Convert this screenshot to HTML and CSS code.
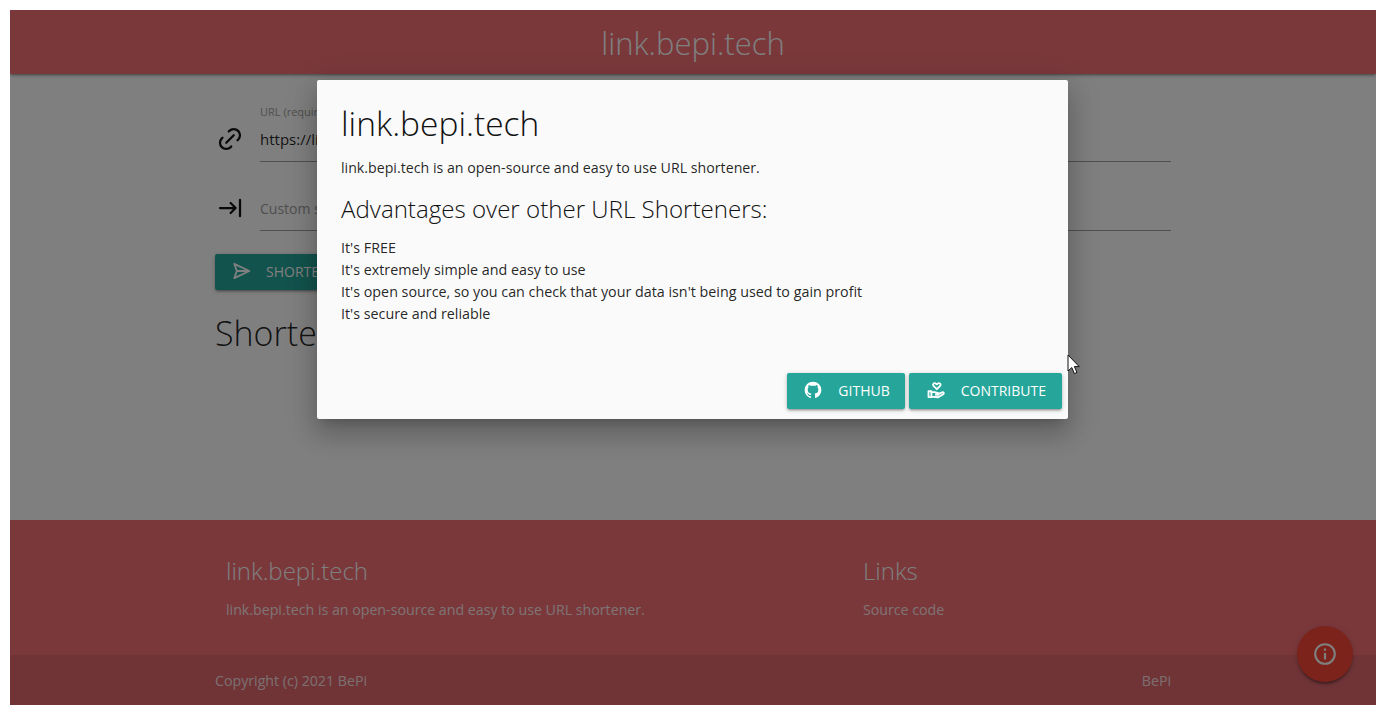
FILE: index.html
```html
<!DOCTYPE html>
<html lang="en">
<head>
    <meta charset="UTF-8">
    <title>link.bepi.tech</title>
    <link rel="stylesheet" href="styles.css">
</head>
<body>
    <div class="page">
        <header class="top-bar">link.bepi.tech</header>

        <main class="content">
            <div class="field">
                <svg class="field-icon" viewBox="0 0 24 24"><path d="M9 15l6-6M11 6l.463-.536a5 5 0 0 1 7.071 7.072l-.534.464M13 18l-.397.534a5.068 5.068 0 0 1-7.127 0a4.972 4.972 0 0 1 0-7.071l.524-.463"/></svg>
                <div class="field-box">
                    <span class="field-label">URL (required)</span>
                    <span class="field-value">https://link.bepi.tech</span>
                </div>
            </div>
            <div class="field field-second">
                <svg class="field-icon" viewBox="0 0 24 24"><path d="M4 12H16.5M16.5 12l-4-4M16.5 12l-4 4M20 5.5v13"/></svg>
                <div class="field-box">
                    <span class="field-placeholder">Custom short URL</span>
                </div>
            </div>
            <div class="btn btn-shorten">
                <svg class="btn-icon btn-icon-line" viewBox="0 0 24 24"><path d="M4 3.5L22 12L4 20.5L7 12ZM7 12H22"/></svg>
                Shorten
            </div>
            <h2 class="result-title">Shortened URLs</h2>
        </main>

        <footer class="footer">
            <div class="footer-main">
                <div class="footer-about">
                    <h3>link.bepi.tech</h3>
                    <p>link.bepi.tech is an open-source and easy to use URL shortener.</p>
                </div>
                <div class="footer-links">
                    <h3>Links</h3>
                    <p>Source code</p>
                </div>
            </div>
            <div class="footer-copy">
                <div class="footer-copy-inner">
                    <span>Copyright (c) 2021 BePi</span>
                    <span>BePi</span>
                </div>
            </div>
        </footer>

        <div class="fab">
            <svg viewBox="0 0 24 24"><path d="M11,9H13V7H11M12,20C7.59,20 4,16.41 4,12C4,7.59 7.59,4 12,4C16.41,4 20,7.59 20,12C20,16.41 16.41,20 12,20M12,2A10,10 0 0,0 2,12A10,10 0 0,0 12,22A10,10 0 0,0 22,12A10,10 0 0,0 12,2M11,17H13V11H11V17Z"/></svg>
        </div>

        <div class="overlay"></div>

        <div class="modal">
            <div class="modal-body">
                <h1>link.bepi.tech</h1>
                <p>link.bepi.tech is an open-source and easy to use URL shortener.</p>
                <h2>Advantages over other URL Shorteners:</h2>
                <ul>
                    <li>It's FREE</li>
                    <li>It's extremely simple and easy to use</li>
                    <li>It's open source, so you can check that your data isn't being used to gain profit</li>
                    <li>It's secure and reliable</li>
                </ul>
            </div>
            <div class="modal-footer">
                <a class="btn btn-github">
                    <svg class="btn-icon" viewBox="0 0 24 24"><path d="M12,2A10,10 0 0,0 2,12C2,16.42 4.87,20.17 8.84,21.5C9.34,21.58 9.5,21.27 9.5,21C9.5,20.77 9.5,20.14 9.5,19.31C6.73,19.91 6.14,17.97 6.14,17.97C5.68,16.81 5.03,16.5 5.03,16.5C4.12,15.88 5.1,15.9 5.1,15.9C6.1,15.97 6.63,16.93 6.63,16.93C7.5,18.45 8.97,18 9.54,17.76C9.63,17.11 9.89,16.67 10.17,16.42C7.95,16.17 5.62,15.31 5.62,11.5C5.62,10.39 6,9.5 6.65,8.79C6.55,8.54 6.2,7.5 6.75,6.15C6.75,6.15 7.59,5.88 9.5,7.17C10.29,6.95 11.15,6.84 12,6.84C12.85,6.84 13.71,6.95 14.5,7.17C16.41,5.88 17.25,6.15 17.25,6.15C17.8,7.5 17.45,8.54 17.35,8.79C18,9.5 18.38,10.39 18.38,11.5C18.38,15.32 16.04,16.16 13.81,16.41C14.17,16.72 14.5,17.33 14.5,18.26C14.5,19.6 14.5,20.68 14.5,21C14.5,21.27 14.66,21.59 15.17,21.5C19.14,20.16 22,16.42 22,12A10,10 0 0,0 12,2Z"/></svg>
                    GitHub
                </a>
                <a class="btn btn-contribute">
                    <svg class="btn-icon btn-icon-line" viewBox="0 0 24 24"><path d="M3 13.5h3.5v7H3zM6.5 14.5h4l4 1.2c1.2.5.7 2.3-.6 2.1l-3-.4M14.5 17l5-2.2c1.6-.6 2.6 1.2 1.2 2.2l-6 3.7-8.2-.7"/><path d="M13 11l-4-3.9c-1.6-1.8.9-4.4 2.8-2.8l1.2 1 1.2-1c1.9-1.6 4.4 1 2.8 2.8z"/></svg>
                    Contribute
                </a>
            </div>
        </div>

        <svg class="cursor" viewBox="0 0 13 21"><path d="M1 1V17L4.8 13.6L7.4 19.6L10 18.5L7.4 12.6H12.2Z"/></svg>
    </div>
</body>
</html>
```

FILE: styles.css
```css
html, body {
    height: 100%;
}

body {
    margin: 0;
    background-color: #fff;
    font-family: "Open Sans", sans-serif;
    font-size: 14px;
    color: rgba(0, 0, 0, 0.87);
}

.page {
    position: relative;
    margin: 10px;
    height: 695px;
    display: flex;
    flex-direction: column;
    overflow: hidden;
}

.top-bar {
    height: 64px;
    line-height: 67px;
    flex-shrink: 0;
    text-align: center;
    font-size: 31px;
    font-weight: 300;
    color: #fff;
    background-color: #f47076;
    box-shadow: 0 2px 2px 0 rgba(0, 0, 0, 0.14), 0 3px 1px -2px rgba(0, 0, 0, 0.12), 0 1px 5px 0 rgba(0, 0, 0, 0.2);
}

.content {
    flex: 1;
    width: 956px;
    margin: 0 auto;
}

.field {
    display: flex;
    align-items: flex-end;
    margin-top: 41px;
}

.field-second {
    margin-top: 22px;
}

.field-icon {
    width: 30px;
    height: 30px;
    margin-right: 15px;
    margin-bottom: 8px;
    flex-shrink: 0;
    fill: none;
    stroke: #111;
    stroke-width: 1.8;
    stroke-linecap: round;
    stroke-linejoin: round;
}

.field-box {
    flex: 1;
    height: 46px;
    position: relative;
    border-bottom: 1px solid #9e9e9e;
}

.field-label {
    position: absolute;
    left: 0;
    top: -11px;
    font-size: 11px;
    color: #9e9e9e;
}

.field-value,
.field-placeholder {
    position: absolute;
    left: 0;
    bottom: 12px;
    font-size: 15px;
}

.field-placeholder {
    font-size: 14px;
    color: #9e9e9e;
}

.btn {
    box-sizing: border-box;
    display: inline-flex;
    align-items: center;
    height: 36px;
    padding: 0 16px 2px;
    border-radius: 2px;
    font-size: 14px;
    text-transform: uppercase;
    color: #fff;
    background-color: #26a69a;
    box-shadow: 0 2px 2px 0 rgba(0, 0, 0, 0.14), 0 3px 1px -2px rgba(0, 0, 0, 0.12), 0 1px 5px 0 rgba(0, 0, 0, 0.2);
}

.btn-shorten {
    margin-top: 23px;
}

.btn-github {
    padding-right: 15px;
}

.btn-contribute {
    padding-left: 17px;
}

.btn-icon {
    width: 20px;
    height: 20px;
    margin-right: 15px;
    fill: currentColor;
}

.btn-icon-line {
    fill: none;
    stroke: currentColor;
    stroke-width: 2.2;
    stroke-linejoin: round;
}

.result-title {
    margin: 20px 0 0;
    font-size: 34px;
    font-weight: 300;
}

.footer {
    flex-shrink: 0;
    color: #fff;
    background-color: #f47076;
}

.footer-main {
    width: 956px;
    height: 135px;
    margin: 0 auto;
    display: flex;
}

.footer h3 {
    margin: 34px 0 0;
    font-size: 24px;
    font-weight: 300;
}

.footer p {
    margin: 13px 0 0;
    font-size: 14.2px;
    color: rgba(255, 255, 255, 0.85);
}

.footer-about {
    width: 637px;
    padding-left: 11px;
}

.footer-copy {
    height: 50px;
    background-color: rgba(51, 51, 51, 0.1);
}

.footer-copy-inner {
    width: 956px;
    height: 100%;
    margin: 0 auto;
    display: flex;
    align-items: center;
    justify-content: space-between;
    font-size: 14.2px;
    color: rgba(255, 255, 255, 0.8);
}

.fab {
    position: absolute;
    left: 1287px;
    top: 616px;
    width: 56px;
    height: 56px;
    display: flex;
    align-items: center;
    justify-content: center;
    border-radius: 50%;
    background-color: #f84636;
    box-shadow: 0 3px 3px 0 rgba(0, 0, 0, 0.14), 0 1px 7px 0 rgba(0, 0, 0, 0.12), 0 3px 1px -1px rgba(0, 0, 0, 0.2);
}

.fab svg {
    width: 26px;
    height: 26px;
    fill: #fff;
}

.overlay {
    position: absolute;
    inset: 0;
    background-color: rgba(0, 0, 0, 0.5);
}

.modal {
    position: absolute;
    left: 307px;
    top: 70px;
    width: 751px;
    height: 339px;
    display: flex;
    flex-direction: column;
    border-radius: 2px;
    background-color: #fafafa;
    box-shadow: 0 16px 24px 2px rgba(0, 0, 0, 0.14), 0 6px 30px 5px rgba(0, 0, 0, 0.12), 0 8px 10px -7px rgba(0, 0, 0, 0.2);
}

.modal-body {
    flex: 1;
    padding: 0 24px;
}

.modal h1 {
    margin: 20px 0 0;
    font-size: 33.5px;
    font-weight: 300;
    color: #111;
}

.modal p {
    margin: 12px 0 0;
    font-size: 14.2px;
}

.modal h2 {
    margin: 15px 0 0;
    font-size: 24.1px;
    font-weight: 300;
    color: #111;
}

.modal ul {
    list-style: none;
    margin: 12px 0 0;
    padding: 0;
}

.modal li {
    line-height: 22px;
    font-size: 14.3px;
}

.modal-footer {
    display: flex;
    justify-content: flex-end;
    gap: 4px;
    padding: 0 6px 10px;
}

.cursor {
    position: absolute;
    left: 1057px;
    top: 344px;
    width: 13px;
    height: 21px;
    fill: #fff;
    stroke: #111;
    stroke-width: 1;
}
```
